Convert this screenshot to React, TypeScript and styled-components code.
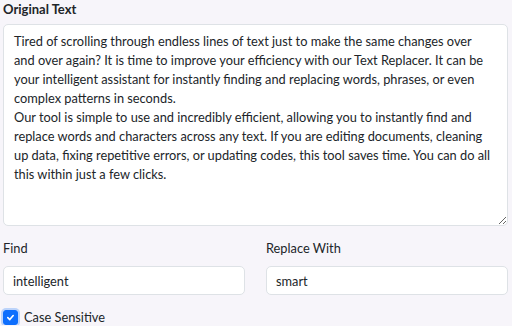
import React, { useState } from "react";
import styled, { createGlobalStyle } from "styled-components";

const GlobalStyle = createGlobalStyle`
  html, body {
    margin: 0;
    padding: 0;
    background: #f7f5fa;
  }
  body {
    font-family: Lato, "Open Sans", sans-serif;
    color: #212529;
  }
`;

const Page = styled.div`
  display: flex;
  flex-direction: column;
  padding: 1px 4px 0 3px;
  width: 512px;
  box-sizing: border-box;
`;

const Title = styled.div`
  font-size: 13px;
  font-weight: 700;
  line-height: 17px;
  margin-bottom: 6px;
`;

const TextArea = styled.textarea`
  display: block;
  box-sizing: border-box;
  width: 100%;
  height: 202px;
  padding: 7px 14px 6px 10px;
  border: 1px solid #dee2e6;
  border-radius: 5px;
  background: #fff;
  font-family: inherit;
  font-size: 12.8px;
  line-height: 19px;
  color: #212529;
  resize: vertical;
  outline: none;
  margin: 0;
`;

const FieldRow = styled.div`
  display: grid;
  grid-template-columns: 1fr 1fr;
  column-gap: 21px;
  margin-top: 13px;
`;

const Field = styled.div`
  display: flex;
  flex-direction: column;
`;

const Label = styled.label`
  font-size: 12.8px;
  line-height: 18px;
  margin-bottom: 9px;
`;

const Input = styled.input`
  box-sizing: border-box;
  height: 29px;
  padding: 0 9px;
  border: 1px solid #dee2e6;
  border-radius: 5px;
  background: #fff;
  font-family: inherit;
  font-size: 12.8px;
  color: #212529;
  outline: none;
`;

const CheckRow = styled.label`
  display: flex;
  align-items: center;
  gap: 6px;
  margin-top: 14px;
  font-size: 12.8px;
  line-height: 16px;
`;

const Box = styled.span<{ $on: boolean }>`
  width: 13px;
  height: 13px;
  border-radius: 3px;
  background: ${(p) => (p.$on ? "#0d6efd" : "#fff")};
  border: 1px solid ${(p) => (p.$on ? "#0d6efd" : "#adb5bd")};
  box-shadow: 0 0 0 2px rgba(13, 110, 253, 0.25);
  display: flex;
  align-items: center;
  justify-content: center;
`;

const TEXT =
  "Tired of scrolling through endless lines of text just to make the same changes over and over again? It is time to improve your efficiency with our Text Replacer. It can be your intelligent assistant for instantly finding and replacing words, phrases, or even complex patterns in seconds.\nOur tool is simple to use and incredibly efficient, allowing you to instantly find and replace words and characters across any text. If you are editing documents, cleaning up data, fixing repetitive errors, or updating codes, this tool saves time. You can do all this within just a few clicks.";

export default function App() {
  const [text, setText] = useState(TEXT);
  const [find, setFind] = useState("intelligent");
  const [replace, setReplace] = useState("smart");
  const [caseSensitive, setCaseSensitive] = useState(true);

  return (
    <Page>
      <GlobalStyle />
      <Title>Original Text</Title>
      <TextArea value={text} onChange={(e) => setText(e.target.value)} />
      <FieldRow>
        <Field>
          <Label>Find</Label>
          <Input value={find} onChange={(e) => setFind(e.target.value)} />
        </Field>
        <Field>
          <Label>Replace With</Label>
          <Input value={replace} onChange={(e) => setReplace(e.target.value)} />
        </Field>
      </FieldRow>
      <CheckRow onClick={() => setCaseSensitive(!caseSensitive)}>
        <Box $on={caseSensitive}>
          {caseSensitive && (
            <svg width="9" height="9" viewBox="0 0 10 10">
              <path d="M2 5.2 L4.2 7.3 L8 2.8" stroke="#fff" strokeWidth="1.8" fill="none" strokeLinecap="round" strokeLinejoin="round" />
            </svg>
          )}
        </Box>
        Case Sensitive
      </CheckRow>
    </Page>
  );
}
